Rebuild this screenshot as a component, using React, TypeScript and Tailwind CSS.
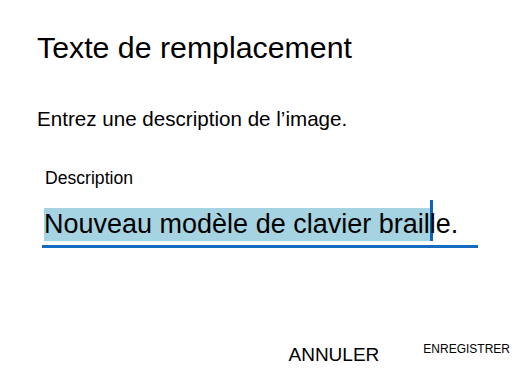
export default function App() {
  return (
    <div className="w-[520px] h-[380px] bg-white text-black overflow-hidden font-['Liberation_Sans',Arial,sans-serif]">
      <div className="flex flex-col pt-[33px] pl-[37px]">
        {/* title */}
        <h1 className="text-[30.3px] leading-[30px] font-normal">Texte de remplacement</h1>
        <p className="mt-[46px] text-[20.6px] leading-[20px]">Entrez une description de l’image.</p>

        {/* field */}
        <label className="mt-[41px] ml-[8px] text-[17.6px] leading-[17px]">Description</label>
        <div className="mt-[13px] ml-[5px] w-[436px] flex items-end pl-[2px] pb-[4px] border-b-[3px] border-[#136cbf]">
          <span className="bg-[#a6d3e1] text-[27px] leading-[33px] whitespace-pre">Nouveau modèle de clavier brail</span>
          <span className="w-[3px] h-[41px] bg-[#0e64b8]" />
          <span className="text-[27px] leading-[33px] -ml-[3px]">le.</span>
        </div>
      </div>

      {/* buttons */}
      <div className="mt-[95px] flex items-start justify-end pr-[10px] gap-[44px]">
        <button className="mt-[2px] text-[19px] leading-[19px]">ANNULER</button>
        <button className="text-[12px] leading-[12px]">ENREGISTRER</button>
      </div>
    </div>
  )
}
